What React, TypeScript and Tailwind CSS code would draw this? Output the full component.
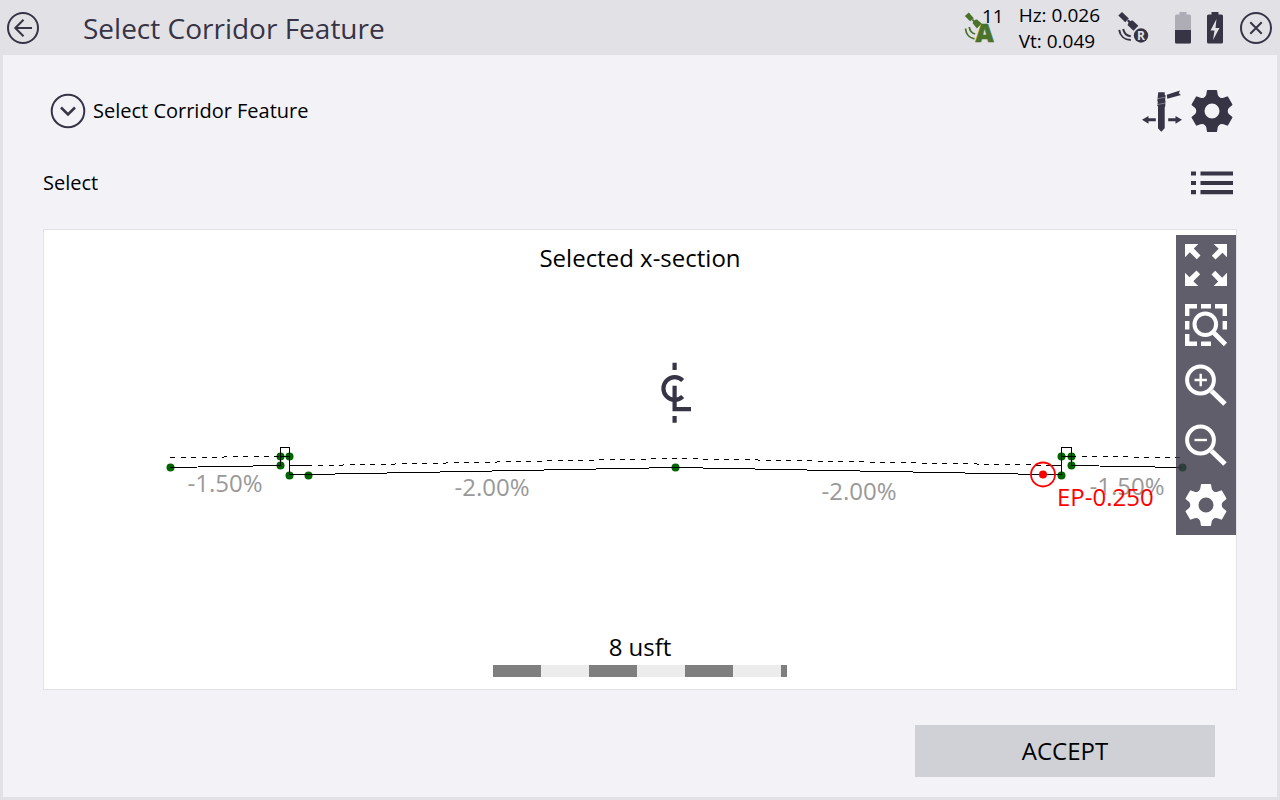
import type { ReactNode } from 'react';

type Point = [number, number];

const DESIGN_LINE: Point[] = [
  [126, 237],
  [236, 235],
  [236, 217],
  [245, 217],
  [245, 244],
  [264, 244],
  [631, 237],
  [999, 244],
  [1017, 244],
  [1017, 217],
  [1027, 217],
  [1027, 235],
  [1138, 237],
];

const NODES: Point[] = [
  [126, 237],
  [236, 226],
  [245, 226],
  [236, 235],
  [245, 245],
  [264, 245],
  [631, 237],
  [1017, 245],
  [1017, 226],
  [1027, 226],
  [1027, 235],
  [1138, 237],
];

const GRADES = [
  { x: 181, y: 262, text: '-1.50%' },
  { x: 448, y: 266, text: '-2.00%' },
  { x: 815, y: 270, text: '-2.00%' },
  { x: 1083, y: 265, text: '-1.50%' },
];

const toPoints = (pts: Point[]) => pts.map((p) => p.join(',')).join(' ');

function GearIcon() {
  return (
    <svg viewBox="-25 -25 50 50" className="size-[50px] shrink-0" fill="currentColor" aria-hidden>
      <circle r="11.5" fill="none" stroke="currentColor" strokeWidth="8" />
      {[0, 60, 120, 180, 240, 300].map((deg) => (
        <path key={deg} transform={`rotate(${deg})`} d="M-4.300-21H4.300Q5-21 5.100-20.300L5.700-16.500Q6-15 7.700-13.400V-12H-7.700V-13.400Q-6-15-5.700-16.500L-5.100-20.300Q-5-21-4.300-21z" />
      ))}
    </svg>
  );
}

function BackIcon() {
  return (
    <svg viewBox="0 0 34 34" className="size-[34px]" fill="none" stroke="currentColor" strokeWidth="2" aria-hidden>
      <circle cx="17" cy="17" r="15" />
      <path d="M26 17H9M17.500 8.800 9.300 17l8.200 8.200" />
    </svg>
  );
}

function CloseIcon() {
  return (
    <svg viewBox="0 0 34 34" className="size-[34px]" fill="none" stroke="currentColor" strokeWidth="2" aria-hidden>
      <circle cx="17" cy="17" r="15" />
      <path d="m11.300 11.300 11.400 11.400M22.700 11.300 11.300 22.700" />
    </svg>
  );
}

function ExpandIcon() {
  return (
    <svg viewBox="0 0 36 36" className="size-9" fill="none" stroke="currentColor" strokeWidth="2" aria-hidden>
      <circle cx="18" cy="18" r="16.300" />
      <path d="m11 14.500 7 7 7-7" strokeWidth="2.500" />
    </svg>
  );
}

function SatelliteAutoIcon() {
  return (
    <svg viewBox="0 0 32 32" className="size-8 overflow-visible text-[#4a7229]" fill="currentColor" aria-hidden>
      <path d="M.8 4 4.800.6l5 5.600L6.100 9.200zM7.800 8.300l1.300-1.200 1.600 1.600-1.300 1.200z" />
      <path d="M8.700 11.200c0-1.800 2-3.600 4.300-3.600l4.700 4-4.800 5z" />
      <path d="M1.500 16.500c.4 5.500 4 9.500 9 10.300M5.300 15c.4 4 2.600 6.200 5.800 7" fill="none" stroke="currentColor" strokeWidth="1.800" />
      <text x="11.500" y="30" fontSize="25" fontWeight="800" stroke="currentColor" strokeWidth="0.600">
        A
      </text>
    </svg>
  );
}

function SatelliteReceiverIcon() {
  return (
    <svg viewBox="0 0 32 32" className="size-8 overflow-visible text-[#363445]" fill="currentColor" aria-hidden>
      <path d="M.3 3.500 4 0l6.800 6.600L7.200 10.200zM9 9l1.500-1.500 2.300 2.300-1.500 1.500z" />
      <path d="M9.700 13.200c0-2.700 2.300-4.700 5-4.800l5.600 5.400-4.800 5z" />
      <path d="M1.200 17.800C2 23.800 6.500 27.800 12.800 28M5.200 17c.7 4 3.500 6.700 7.600 7.300" fill="none" stroke="currentColor" strokeWidth="2" />
      <circle cx="23" cy="23.500" r="8.200" fill="#e2e1e6" />
      <circle cx="23" cy="23.500" r="7.200" />
      <text x="23" y="28" fontSize="12" fontWeight="700" textAnchor="middle" fill="#e2e1e6">
        R
      </text>
    </svg>
  );
}

function BatteryIcon({ charging = false }: { charging?: boolean }) {
  return (
    <svg viewBox="0 0 16 32" className="h-8 w-4" aria-hidden>
      <path
        d="M4.500 0h7v2.500H14.500a1.500 1.500 0 0 1 1.500 1.500v26a1.500 1.500 0 0 1-1.500 1.500h-13A1.500 1.500 0 0 1 0 30V4a1.500 1.500 0 0 1 1.500-1.500h3z"
        fill={charging ? '#363445' : '#aeadb5'}
      />
      {charging ? (
        <path d="M9.500 7 3.500 18.500h4L6 28l6.500-12H8.500z" fill="#e2e1e6" />
      ) : (
        <path d="M0 18h16v12a1.500 1.500 0 0 1-1.500 1.500h-13A1.500 1.500 0 0 1 0 30z" fill="#363445" />
      )}
    </svg>
  );
}

function StakeIcon() {
  return (
    <svg viewBox="0 0 40 44" className="h-11 w-10" fill="currentColor" aria-hidden>
      <path d="M16.200 3.300h6.500v2.500l1 .7-.6 4.500.4 1-.3 5.500-.5.700v21L19.300 42.700 16 39.200V17.500l-.7-.7.5-4-.5-1.300.5-4z" />
      <path d="M15 9.800 23.500 8.200M15 15.600l8.500-1.600" stroke="#f3f2f7" strokeWidth=".4" />
      <path d="M24.800 5.800 38 1.400 36.800 4.200 39 6 25.300 9.800z" />
      <path d="M0 30.800 6.500 27v2.300H13.800v2.900H6.500v2.500zM40 30.800 33.500 27v2.300H26.200v2.900H33.500v2.500z" />
    </svg>
  );
}

function ListIcon() {
  return (
    <svg viewBox="0 0 42 24" className="h-6 w-[42px]" fill="currentColor" aria-hidden>
      <path d="M0 .5h5v4H0zM9.500.5H42v4H9.500zM0 10h5v4H0zM9.500 10H42v4H9.500zM0 19h5v4.200H0zM9.500 19H42v4.200H9.500z" />
    </svg>
  );
}

function ToolButton({ label, children }: { label: string; children: ReactNode }) {
  return (
    <button type="button" aria-label={label} className="grid size-[60px] place-items-center text-white">
      {children}
    </button>
  );
}

function ToolIcon({ children }: { children: ReactNode }) {
  return (
    <svg viewBox="0 0 60 60" className="size-[60px]" fill="none" stroke="currentColor" strokeWidth="4" aria-hidden>
      {children}
    </svg>
  );
}

function Toolbar() {
  return (
    <div className="absolute top-[5px] right-0 flex flex-col bg-[#383646]/80">
      <ToolButton label="Zoom to extents">
        <ToolIcon>
          <g fill="currentColor" stroke="none">
            {[0, 90, 180, 270].map((deg) => (
              <path key={deg} transform={`rotate(${deg} 30 30)`} d="M9 9h13.300l-4.500 4.500 6.700 7-3.700 3.700-7-6.900L9 22.300z" />
            ))}
          </g>
        </ToolIcon>
      </ToolButton>
      <ToolButton label="Zoom window">
        <ToolIcon>
          <path d="M21 11.200H11.200V21M39 11.200H48.800V21M11.200 39V48.800H21M25 11.200H35M11.200 26v8.500M48.800 26v8.500M25 48.800H35" strokeWidth="4.400" />
          <circle cx="29.300" cy="29.300" r="10.800" />
          <path d="M38 38 49.500 49.500" strokeWidth="4.600" />
        </ToolIcon>
      </ToolButton>
      <ToolButton label="Zoom in">
        <ToolIcon>
          <circle cx="24.500" cy="25" r="13.400" />
          <path d="M35.500 36 49 49" strokeWidth="5" />
          <path d="M18.500 25h12.400M24.700 18.800v12.400" strokeWidth="2.400" />
        </ToolIcon>
      </ToolButton>
      <ToolButton label="Zoom out">
        <ToolIcon>
          <circle cx="24.500" cy="25" r="13.400" />
          <path d="M35.500 36 49 49" strokeWidth="5" />
          <path d="M18.500 25h12.400" strokeWidth="2.400" />
        </ToolIcon>
      </ToolButton>
      <ToolButton label="View settings">
        <GearIcon />
      </ToolButton>
    </div>
  );
}

function CrossSection() {
  return (
    <svg viewBox="0 0 1192 459" className="block h-auto w-full" fontSize="24" role="img" aria-label="Selected x-section">
      <text x="596" y="37" textAnchor="middle">
        Selected x-section
      </text>

      {/* centreline symbol */}
      <g stroke="#363445" strokeWidth="4.200" fill="none">
        <path d="M630.600 132.700v7.300M630.600 186v6.700" />
        <path d="M638.700 150.500A11.300 11.300 0 1 0 638.700 166.500" />
        <path d="M630.600 155.700v23.500H647" />
      </g>

      {GRADES.map((g) => (
        <text key={g.x} x={g.x} y={g.y} textAnchor="middle" fill="#999999">
          {g.text}
        </text>
      ))}

      <g fill="none" stroke="#000" shapeRendering="crispEdges" transform="translate(0.5 0.5)">
        <g fill="#006400" stroke="none" shapeRendering="auto">
          {NODES.map(([x, y]) => (
            <circle key={`${x}-${y}`} cx={x} cy={y} r="4" />
          ))}
        </g>
        <polyline points={toPoints(DESIGN_LINE)} />
        <path d="M245 235h22M1017 235h-10M236 226h9M1017 226h10" />
        <path d="M126 227 236 226M274 235 631 228 1014 235M1027 226 1138 227" strokeDasharray="5 5.400" />
      </g>

      <circle cx="999" cy="244.500" r="12" fill="none" stroke="#f00" strokeWidth="1.800" />
      <circle cx="999" cy="244.500" r="4" fill="#f00" />
      <text x="1013" y="276" fill="#f00">
        EP-0.250
      </text>

      <text x="596" y="426" textAnchor="middle">
        8 usft
      </text>
      <rect x="449" y="435" width="294" height="12" fill="#ececec" />
      <path d="M449 435h48v12h-48zM545 435h48v12h-48zM641 435h48v12h-48zM737 435h6v12h-6z" fill="#7f7f7f" />
    </svg>
  );
}

function Header() {
  return (
    <header className="flex h-[55px] items-center bg-[#e2e1e6] pr-[7px] pl-[6px] text-[#363445]">
      <button type="button" aria-label="Back">
        <BackIcon />
      </button>
      <h1 className="ml-[43px] flex-1 text-[28px] leading-8">Select Corridor Feature</h1>
      <div className="flex items-center text-black">
        <SatelliteAutoIcon />
        <span className="-mt-[6px] -ml-[14px] self-start text-[19px] leading-5">11</span>
      </div>
      <div className="ml-[15px] text-[19px] leading-[26px] text-black">
        <p>Hz: 0.026</p>
        <p>Vt: 0.049</p>
      </div>
      <div className="ml-[18px] flex items-center">
        <SatelliteReceiverIcon />
      </div>
      <div className="ml-[25px] flex items-center gap-4">
        <BatteryIcon />
        <BatteryIcon charging />
        <button type="button" aria-label="Close">
          <CloseIcon />
        </button>
      </div>
    </header>
  );
}

export default function App() {
  return (
    <div className="flex min-h-screen flex-col bg-[#e2e1e6] font-['Open_Sans','Noto_Sans',sans-serif] text-black">
      <Header />
      <main className="mx-[3px] mb-[3px] flex flex-1 flex-col bg-[#f3f2f7] px-10 pt-8 pb-5">
        <div className="flex h-12 items-center text-[#363445]">
          <button type="button" className="ml-[7px] flex items-center gap-[7px] text-xl">
            <ExpandIcon />
            <span className="text-black">Select Corridor Feature</span>
          </button>
          <div className="ml-auto flex items-center gap-[5px]">
            <button type="button" aria-label="Stakeout offsets">
              <StakeIcon />
            </button>
            <button type="button" aria-label="Settings">
              <GearIcon />
            </button>
          </div>
        </div>
        <div className="mt-6 flex h-12 items-center justify-between text-[#363445]">
          <h2 className="text-xl text-black">Select</h2>
          <button type="button" aria-label="Feature list" className="mr-1">
            <ListIcon />
          </button>
        </div>
        <section className="relative mt-[22px] border border-[#e2e1e6] bg-white">
          <CrossSection />
          <Toolbar />
        </section>
        <div className="mt-auto flex justify-end pr-[22px]">
          <button type="button" className="h-[52px] w-[300px] bg-[#d0d1d6] text-2xl">
            ACCEPT
          </button>
        </div>
      </main>
    </div>
  );
}
